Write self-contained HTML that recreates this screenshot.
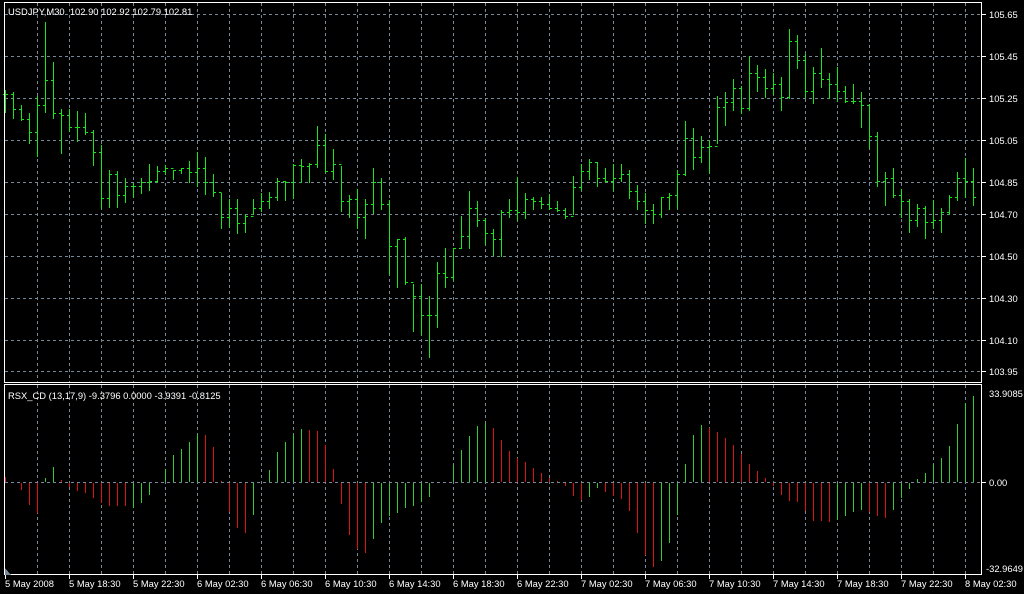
<!DOCTYPE html>
<html><head><meta charset="utf-8"><style>
html,body{margin:0;padding:0;background:#000;width:1024px;height:594px;overflow:hidden}
svg{display:block}
text{font-family:"Liberation Sans",sans-serif;font-size:9.4px;fill:#fff}
</style></head><body>
<svg id="s" width="1024" height="594" xmlns="http://www.w3.org/2000/svg" shape-rendering="crispEdges">
<rect width="1024" height="594" fill="#000"/>
<g id="grid" stroke="#778899" stroke-width="1" stroke-dasharray="3,3"></g>
<g id="bars" stroke="#19e619" stroke-width="1"></g>
<g id="ind" stroke-width="1"></g>
<g stroke="#fff" fill="none" stroke-width="1">
<rect x="4.5" y="2.5" width="977" height="380"/>
<rect x="4.5" y="384.5" width="977" height="190"/>
</g>
<g id="ticks" stroke="#fff"></g>
<g id="labels"></g>
<text x="8" y="15">USDJPY,M30&#160;&#160;102.90 102.92 102.79 102.81</text>
<text x="8" y="399">RSX_CD (13,17,9) -9.3796 0.0000 -3.9391 -0.8125</text>
<polygon points="5,575 5,568 11,575" fill="#778899"/>
</svg>
<script>
var NS="http://www.w3.org/2000/svg";
function L(g,x1,y1,x2,y2,c){var e=document.createElementNS(NS,"line");e.setAttribute("x1",x1);e.setAttribute("y1",y1);e.setAttribute("x2",x2);e.setAttribute("y2",y2);if(c)e.setAttribute("stroke",c);document.getElementById(g).appendChild(e);}
function T(x,y,s){var e=document.createElementNS(NS,"text");e.setAttribute("x",x);e.setAttribute("y",y);e.textContent=s;document.getElementById("labels").appendChild(e);}
for(var x=37;x<=965;x+=32){L("grid",x+.5,3,x+.5,382);L("grid",x+.5,385,x+.5,574);}
var P=[[14,"105.65"],[56,"105.45"],[98,"105.25"],[140,"105.05"],[182,"104.85"],[214,"104.70"],[256,"104.50"],[298,"104.30"],[340,"104.10"],[371,"103.95"]];
P.forEach(function(p){L("grid",5,p[0]+.5,981,p[0]+.5);L("ticks",982,p[0]+.5,986,p[0]+.5);T(989,p[0]+4,p[1]);});
L("grid",5,482.5,981,482.5);L("ticks",982,482.5,986,482.5);T(989,486,"0.00");
T(989,397,"33.9085");T(986,572,"-32.9649");
var TL=["5 May 2008","5 May 18:30","5 May 22:30","6 May 02:30","6 May 06:30","6 May 10:30","6 May 14:30","6 May 18:30","6 May 22:30","7 May 02:30","7 May 06:30","7 May 10:30","7 May 14:30","7 May 18:30","7 May 22:30","8 May 02:30"];
TL.forEach(function(s,i){var x=5+64*i;L("ticks",x+.5,575,x+.5,579);T(x,587,s);});
var B=[[90,112,94],[92,118,109],[105,120,119],[113,143,132],[96,156,105],[22,112,80],[62,118,113],[109,153,115],[109,131,127],[111,141,127],[113,134,132],[130,165,152],[145,208,198],[170,207,174],[171,207,195],[178,202,186],[183,197,186],[178,193,182],[164,190,181],[166,182,171],[165,174,168],[170,179,170],[168,173,168],[161,182,172],[152,186,168],[157,194,182],[174,196,192],[193,228,217],[199,227,208],[199,233,223],[214,232,216],[199,214,208],[193,211,201],[192,208,197],[178,200,181],[181,200,182],[164,198,165],[159,182,166],[163,182,164],[126,167,145],[134,172,171],[149,179,164],[166,211,201],[195,217,199],[189,228,217],[199,238,204],[168,213,182],[178,209,204],[200,274,246],[239,287,239],[237,284,282],[284,331,296],[284,334,315],[296,357,315],[262,327,273],[248,287,277],[248,280,248],[216,248,236],[191,248,208],[201,226,220],[218,244,233],[229,255,239],[210,256,212],[199,217,210],[177,220,212],[193,218,199],[197,209,201],[197,208,204],[194,209,208],[201,211,210],[208,218,216],[176,214,187],[164,190,171],[159,179,162],[162,186,178],[168,182,181],[164,190,178],[164,181,174],[170,198,191],[185,209,201],[193,223,210],[204,223,214],[197,217,197],[193,209,195],[170,208,174],[121,175,138],[128,169,157],[136,162,147],[140,173,146],[96,143,107],[92,125,102],[79,110,88],[86,113,108],[56,110,73],[65,91,77],[69,97,88],[73,94,84],[77,110,97],[29,98,41],[35,68,60],[54,97,91],[67,103,73],[48,87,79],[73,98,84],[67,101,91],[86,102,101],[84,103,101],[92,127,105],[104,148,136],[132,186,181],[172,205,178],[168,197,195],[189,217,201],[199,232,220],[204,226,208],[206,238,222],[200,228,220],[208,232,212],[195,214,197],[172,200,178],[158,197,181],[168,205,197]];
var pc=94;
B.forEach(function(b,i){var x=5+8*i+.5;L("bars",x,b[0],x,b[1]+1);var o=pc;L("bars",x-2.5,o+.5,x,o+.5);L("bars",x,b[2]+.5,x+2.5,b[2]+.5);pc=b[2];});
var I=[[5,5,"r"],[21,-7,"r"],[29,-22,"r"],[37,-30,"r"],[45,4,"g"],[53,15,"g"],[61,2,"r"],[69,-4,"r"],[77,-8,"r"],[85,-10,"r"],[93,-15,"r"],[101,-20,"r"],[109,-23,"r"],[117,-23,"r"],[125,-23,"r"],[133,-25,"g"],[141,-20,"g"],[149,-12,"g"],[165,13,"g"],[173,27,"g"],[181,33,"g"],[189,40,"g"],[197,48,"g"],[205,47,"r"],[213,35,"r"],[221,1,"r"],[229,-29,"r"],[237,-45,"r"],[245,-50,"r"],[253,-32,"g"],[269,12,"g"],[277,30,"g"],[285,40,"g"],[293,48,"g"],[301,53,"g"],[309,52,"r"],[317,51,"r"],[325,37,"r"],[333,13,"r"],[341,-21,"r"],[349,-52,"r"],[357,-66,"r"],[365,-70,"r"],[373,-56,"g"],[381,-40,"g"],[389,-33,"g"],[397,-30,"g"],[405,-25,"g"],[413,-23,"g"],[421,-19,"g"],[429,-14,"g"],[453,17,"g"],[461,32,"g"],[469,46,"g"],[477,56,"g"],[485,59,"g"],[493,54,"r"],[501,42,"r"],[509,31,"r"],[517,24,"r"],[525,20,"r"],[533,14,"r"],[541,9,"r"],[549,4,"r"],[557,1,"r"],[565,-3,"r"],[573,-13,"r"],[581,-17,"r"],[589,-14,"g"],[597,-5,"g"],[605,-9,"r"],[613,-13,"r"],[621,-16,"r"],[629,-28,"r"],[637,-50,"r"],[645,-72,"r"],[653,-84,"r"],[661,-78,"g"],[669,-60,"g"],[677,-32,"g"],[685,18,"g"],[693,47,"g"],[701,57,"g"],[709,54,"r"],[717,50,"r"],[725,44,"r"],[733,37,"r"],[741,28,"r"],[749,18,"r"],[757,11,"r"],[765,4,"r"],[773,-3,"r"],[781,-12,"r"],[789,-18,"r"],[797,-19,"r"],[805,-28,"r"],[813,-38,"r"],[821,-38,"r"],[829,-39,"r"],[837,-37,"g"],[845,-33,"g"],[853,-29,"g"],[861,-27,"g"],[869,-29,"r"],[877,-33,"r"],[885,-35,"r"],[893,-27,"g"],[901,-15,"g"],[909,-6,"g"],[917,3,"g"],[925,9,"g"],[933,18,"g"],[941,24,"g"],[949,36,"g"],[957,58,"g"],[965,79,"g"],[973,86,"g"]];
I.forEach(function(a){var c=a[2]=="g"?"#33cc33":"#dd1111";var x=a[0]+.5;if(a[1]>0)L("ind",x,482-a[1],x,482,c);else L("ind",x,483,x,483-a[1],c);});
L("ind",981.5,400,981.5,482,"#dd1111");
</script>
</body></html>
